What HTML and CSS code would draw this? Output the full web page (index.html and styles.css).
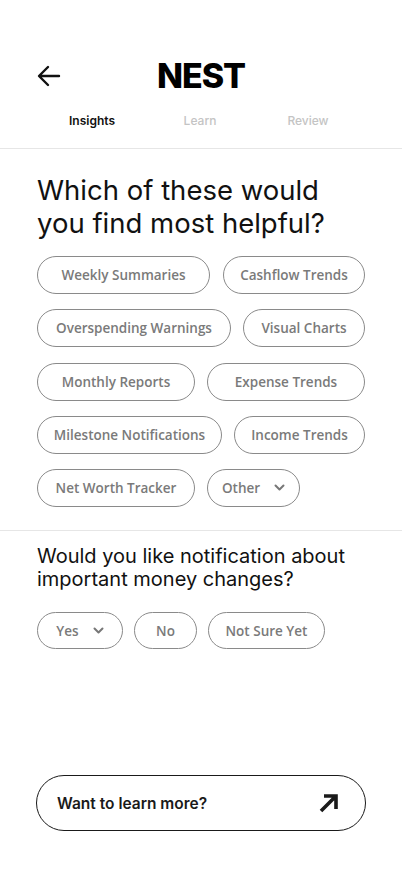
FILE: index.html
```html
<!DOCTYPE html>
<html>
<head>
<meta charset="utf-8">
<link rel="stylesheet" href="styles.css">
</head>
<body>
<div class="screen">
  <header class="top">
    <div class="top-bar">
      <div class="back">
        <svg width="24" height="22" viewBox="0 0 24 22"><path d="M22 11H3M11 2L2 11l9 9" fill="none" stroke="#111" stroke-width="2.4" stroke-linecap="round" stroke-linejoin="round"/></svg>
      </div>
      <div class="logo">NEST</div>
      <div></div>
    </div>
    <nav class="tabs">
      <span class="tab active">Insights</span>
      <span class="tab">Learn</span>
      <span class="tab">Review</span>
    </nav>
  </header>

  <section class="block first">
    <h1 class="q1">Which of these would you find most helpful?</h1>
    <div class="chips">
      <div class="row"><span class="chip c173">Weekly Summaries</span><span class="chip c142">Cashflow Trends</span></div>
      <div class="row"><span class="chip c194">Overspending Warnings</span><span class="chip c122">Visual Charts</span></div>
      <div class="row"><span class="chip c158">Monthly Reports</span><span class="chip c158">Expense Trends</span></div>
      <div class="row"><span class="chip c185">Milestone Notifications</span><span class="chip c131">Income Trends</span></div>
      <div class="row"><span class="chip c158">Net Worth Tracker</span><span class="chip drop c93">Other <svg width="11" height="8" viewBox="0 0 11 8"><path d="M1.5 1.5l4 4 4-4" fill="none" stroke="#777" stroke-width="2" stroke-linecap="round" stroke-linejoin="round"/></svg></span></div>
    </div>
  </section>

  <section class="block second">
    <h2 class="q2">Would you like notification about important money changes?</h2>
    <div class="row small">
      <span class="chip drop yes">Yes <svg width="11" height="8" viewBox="0 0 11 8"><path d="M1.5 1.5l4 4 4-4" fill="none" stroke="#777" stroke-width="2" stroke-linecap="round" stroke-linejoin="round"/></svg></span>
      <span class="chip no">No</span>
      <span class="chip ns">Not Sure Yet</span>
    </div>
  </section>

  <div class="spacer"></div>

  <div class="cta-wrap">
    <button class="cta">
      <span>Want to learn more?</span>
      <svg width="24" height="24" viewBox="0 0 24 24"><path d="M4 20L19 5M7 5h12v13" fill="none" stroke="#1a1a1a" stroke-width="3.6" stroke-linecap="butt" stroke-linejoin="miter"/></svg>
    </button>
  </div>
</div>
</body>
</html>
```
FILE: styles.css
```css
* { box-sizing: border-box; }
html, body { margin: 0; padding: 0; background: #fff; }
body { font-family: Inter, "Noto Sans", sans-serif; color: #111; }
.screen { width: 402px; height: 874px; display: flex; flex-direction: column; }

.top { border-bottom: 1px solid #e6e6e6; padding-top: 56px; height: 149px; }
.top-bar { display: grid; grid-template-columns: 1fr auto 1fr; align-items: center; height: 40px; }
.back { padding-left: 37px; display: flex; align-items: center; }
.back svg { display: block; }
.logo { font-size: 34px; font-weight: 800; letter-spacing: -1px; line-height: 40px; color: #000; }

.tabs { display: grid; grid-template-columns: 108px 108px 108px; padding-left: 38px; margin-top: 14px; height: 20px; align-items: center; }
.tab { text-align: center; font-size: 12px; font-weight: 500; color: #c4c4c4; }
.tab.active { color: #111; font-weight: 600; }

.block { padding: 0 37px; }
.first { padding-top: 25px; padding-bottom: 23px; border-bottom: 1px solid #e6e6e6; }
.q1 { margin: 0; max-width: 300px; font-size: 27.5px; font-weight: 400; line-height: 33px; color: #111; }
.chips { margin-top: 16px; display: flex; flex-direction: column; gap: 15.25px; }
.row { display: flex; gap: 12px; }
.chip { flex: 0 0 auto; height: 38px; border: 1px solid #8a8a8a; border-radius: 19px; display: flex; align-items: center; justify-content: center; padding: 0 8px; font-family: "Open Sans", sans-serif; font-size: 13.5px; font-weight: 600; color: #7a7a7a; white-space: nowrap; }
.c173 { width: 173px; }
.c142 { width: 142px; margin-left: 1px; }
.c194 { width: 194px; }
.c122 { width: 122px; }
.c158 { width: 158px; }
.c185 { width: 185px; }
.c131 { width: 131px; }
.c93 { width: 93px; }
.drop { gap: 14px; }
.drop svg { display: block; }

.second { padding-top: 14px; }
.q2 { margin: 0; font-size: 20px; font-weight: 400; line-height: 23px; color: #111; }
.row.small { margin-top: 21px; gap: 11px; }
.row.small .chip { height: 37px; }
.yes { width: 86px; }
.no { width: 63px; }
.ns { width: 117px; }

.spacer { flex: 1; }
.cta-wrap { padding: 0 36px 43px; }
.cta { width: 100%; height: 56px; border: 1.3px solid #1a1a1a; border-radius: 28px; background: #fff; display: flex; align-items: center; justify-content: space-between; padding: 0 24px 0 20px; font-family: Inter, sans-serif; font-size: 15.5px; font-weight: 600; color: #1a1a1a; }
.cta svg { display: block; }
```
